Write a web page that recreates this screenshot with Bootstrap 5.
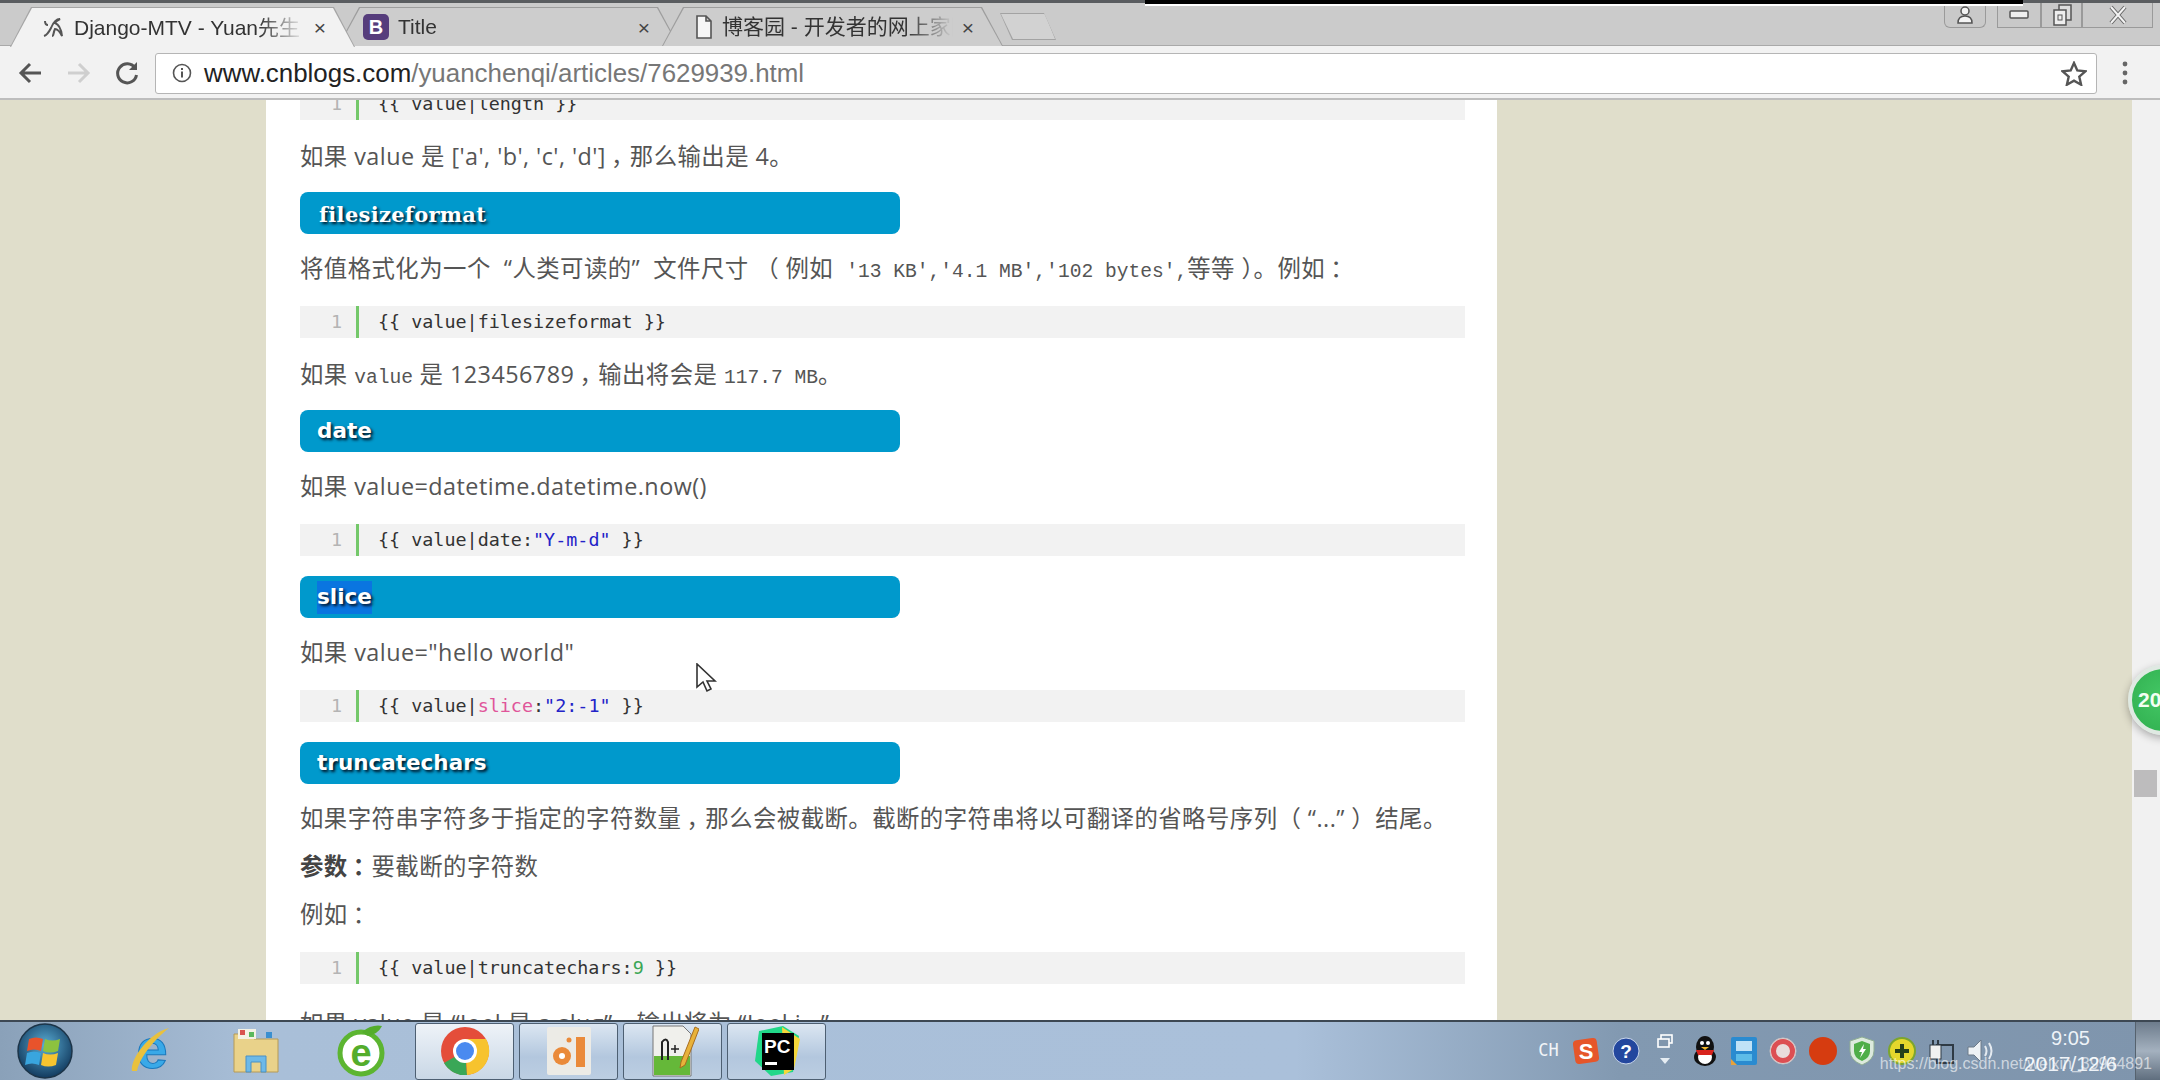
<!DOCTYPE html>
<html lang="zh-CN">
<head>
    <meta charset="UTF-8">
    <meta name="viewport" content="width=device-width, initial-scale=1.0">
    <title>Django-MTV - Yuan先生</title>
    <link href="https://cdn.jsdelivr.net/npm/bootstrap@5.3.0/dist/css/bootstrap.min.css" rel="stylesheet">
    <style>
        html, body { height: 100%; }
        body {
            overflow: hidden;
            background: #e0decb;
            font-family: "Open Sans", "Noto Sans CJK SC", sans-serif;
            color: #555;
        }
        .screen { height: 1080px; position: relative; }

        /* browser chrome */
        .tab-strip {
            height: 46px;
            padding: 4px 7px 0 10px;
            background: #cbcbcb;
            border-top: 3px solid #5a5d60;
            border-bottom: 1px solid #a9a9a9;
            position: relative;
        }
        .tab-item {
            width: 341px;
            height: 39px;
            margin-right: -17px;
            position: relative;
            background: #9d9d9d;
            clip-path: polygon(0 100%, 21px 0, calc(100% - 21px) 0, 100% 100%);
            font-family: "Liberation Sans", "Noto Sans CJK SC", sans-serif;
            font-size: 21px;
            color: #333;
            flex-shrink: 0;
        }
        .tab-fill {
            position: absolute;
            inset: 1px 1px 0 1px;
            background: #cdcdcd;
            clip-path: polygon(0 100%, 21px 0, calc(100% - 21px) 0, 100% 100%);
            display: flex;
            align-items: center;
            padding: 0 28px 0 24px;
            gap: 9px;
        }
        .tab-active { z-index: 2; width: 345px; background: #a5a5a5; height: 40px; }
        .tab-active .tab-fill { background: #f2f2f2; bottom: 0; padding-left: 30px; }
        .tab-label {
            flex: 1;
            overflow: hidden;
            white-space: nowrap;
            -webkit-mask-image: linear-gradient(90deg, #000 80%, transparent 100%);
            mask-image: linear-gradient(90deg, #000 80%, transparent 100%);
        }
        .tab-x { font-size: 21px; color: #444; line-height: 1; }
        .tab-new {
            width: 56px;
            height: 27px;
            margin: 6px 0 0 14px;
            background: #a3a3a3;
            clip-path: polygon(0 0, 44px 0, 100% 100%, 12px 100%);
            position: relative;
        }
        .tab-new::before {
            content: "";
            position: absolute;
            inset: 1px;
            background: #d2d2d2;
            clip-path: polygon(0 0, 44px 0, 100% 100%, 12px 100%);
        }
        .rec-bar {
            position: absolute;
            left: 1145px;
            top: -3px;
            width: 878px;
            height: 6px;
            background: #000;
            border-bottom: 2px solid #fff;
        }
        .win-btn {
            height: 25px;
            background: #c9c9c9;
            border: 1px solid #9a9a9a;
            border-top: 0;
            display: flex;
            align-items: center;
            justify-content: center;
            margin-top: -4px;
        }
        .win-user { width: 42px; margin-right: 11px; }
        .win-min { width: 44px; }
        .win-restore { width: 41px; }
        .win-close { width: 71px; }
        .toolbar {
            height: 54px;
            background: #f2f2f2;
            border-bottom: 2px solid #bdbdbd;
            padding: 2px 8px 0 5px;
        }
        .nav-slot { width: 50px; }
        .nav-slot-fwd { width: 47px; }
        .omnibox {
            width: 1942px;
            height: 41px;
            margin-left: 3px;
            background: #fff;
            border: 1px solid #b5b5b5;
            border-radius: 3px;
            padding: 0 9px 0 16px;
            font-family: "Liberation Sans", sans-serif;
            font-size: 25.9px;
            color: #777;
            flex-shrink: 0;
        }
        .omnibox-info { margin-right: 12px; }
        .omnibox b { font-weight: 400; color: #222; }

        /* page */
        .page-view {
            height: 920px;
            overflow: hidden;
            background: #e0decb;
        }
        .post-col {
            width: 1231px;
            margin-left: 266px;
            height: 100%;
            background: #fff;
            padding: 0 32px 0 34px;
            overflow: hidden;
            font-size: 23.4px;
            line-height: 28px;
            flex-shrink: 0;
        }
        .post-col p { height: 30px; margin: 0 0 18px; white-space: nowrap; letter-spacing: .45px; }
        .post-col p.para-last { margin-top: 25px; }
        .post-col p strong { color: #444; }
        .mono-inline { font-family: "Liberation Mono", monospace; font-size: 19.6px; letter-spacing: 0; }
        .cjk-mark { position: relative; left: .22em; }
        .sec-title {
            height: 42px;
            width: 600px;
            margin: 20px 0;
            padding: 0 17px;
            background: #0099cc;
            border-radius: 8px;
            color: #fff;
            font-family: "DejaVu Sans", sans-serif;
            font-weight: 700;
            font-size: 21.5px;
            line-height: 42px;
            text-shadow: 2px 2px 3px #012;
        }
        .sec-serif { font-family: "DejaVu Serif", serif; font-size: 21px; padding-left: 19px; letter-spacing: .3px; line-height: 46px; }
        .sec-title mark {
            padding: 3px 0 5px;
            background: #0a75e0;
            color: #fff;
        }
        .code-row {
            height: 32px;
            margin: 22px 0;
            background: #f2f2f2;
            font-family: "DejaVu Sans Mono", monospace;
            font-size: 18.4px;
            line-height: 32px;
            color: #333;
        }
        .code-first { margin-top: -12px; }
        .code-tail { margin-bottom: 20px; }
        .code-num { width: 59px; padding-right: 14px; text-align: right; color: #b4b4b4; border-right: 3px solid #74c86a; }
        .code-text { padding-left: 19px; white-space: pre; }
        .tok-pink { color: #e0559a; }
        .tok-blue { color: #2323c8; }
        .tok-green { color: #3aa655; }
        .side-gutter { flex: 1; }
        .scroll-track { width: 28px; background: #f1f1f1; position: relative; }
        .scroll-thumb {
            position: absolute;
            left: 2px;
            top: 670px;
            width: 23px;
            height: 27px;
            background: #bdbcbd;
        }
        .float-badge {
            position: absolute;
            left: 2128px;
            top: 665px;
            width: 70px;
            height: 70px;
            border-radius: 50%;
            background: radial-gradient(circle at 50% 45%, #44c765, #2fae4e);
            border: 4px solid #dfe9e2;
            box-shadow: 0 3px 8px rgba(0, 0, 0, .3);
            color: #f2fff2;
            font-family: "Liberation Sans", sans-serif;
            font-weight: 700;
            font-size: 21px;
            line-height: 62px;
            padding-left: 6px;
        }
        .mouse-cursor { position: absolute; left: 695px; top: 663px; }

        /* taskbar */
        .taskbar {
            height: 60px;
            position: relative;
            background: linear-gradient(90deg, #8aa1b9 0, #a9bfd8 12%, #aac0da 60%, #8299b1 75%, #7f95ad 100%);
            border-top: 2px solid #3d4853;
        }
        .pin-slot { width: 105px; height: 58px; }
        .start-slot { width: 98px; height: 58px; padding-left: 15px; }
        .app-btn {
            width: 99px;
            height: 57px;
            margin-right: 5px;
            background: linear-gradient(180deg, #dbe6f2, #b3c7de 60%, #bccee2);
            border: 1px solid #4d5f72;
            border-radius: 3px;
        }
        .app-first { background: linear-gradient(180deg, #eef3f8, #c9d7e6); margin-left: 2px; }
        .tray-lang { font-family: "DejaVu Sans Mono", monospace; font-size: 17px; color: #f2f5f8; width: 48px; text-align: right; padding-right: 8px; }
        .tray-slot { width: 39.4px; height: 58px; }
        .clock {
            width: 135px;
            padding-left: 6px;
            text-align: center;
            font-family: "Liberation Sans", sans-serif;
            color: #eef3f8;
        }
        .clock-time { font-size: 20px; line-height: 26px; }
        .clock-date { font-size: 21px; line-height: 26px; }
        .show-desktop { width: 25px; height: 58px; background: linear-gradient(180deg, #6d7c8c, #a4b1bf 50%, #5f6e7e); border-left: 1px solid #56626e; }
        .watermark {
            position: absolute;
            right: 8px;
            top: 1052px;
            font-family: "Liberation Sans", sans-serif;
            font-size: 16px;
            color: rgba(255, 255, 255, .62);
        }
    </style>
</head>
<body>
<div class="screen">

    <div class="tab-strip d-flex align-items-start">
        <div class="tab-item tab-active">
            <div class="tab-fill">
                <svg width="24" height="26" viewBox="0 0 24 26"><path d="M3 21c3-1 5-4 7-8 2-5 5-9 9-9-2 1-4 2-5 4 3 1 6 5 7 13-2-4-4-7-7-7-2 4-1 7-3 7M7 10c-2 0-3-2-3-4" fill="none" stroke="#555" stroke-width="2"/></svg>
                <span class="tab-label">Django-MTV - Yuan先生</span>
                <span class="tab-x">×</span>
            </div>
        </div>
        <div class="tab-item">
            <div class="tab-fill">
                <svg width="26" height="26" viewBox="0 0 26 26"><rect width="26" height="26" rx="5" fill="#563d7c"/><text x="13" y="20" text-anchor="middle" font-family="Liberation Sans" font-weight="700" font-size="20" fill="#fff">B</text></svg>
                <span class="tab-label">Title</span>
                <span class="tab-x">×</span>
            </div>
        </div>
        <div class="tab-item">
            <div class="tab-fill">
                <svg width="18" height="24" viewBox="0 0 18 24" class="ms-2"><path d="M2 1h9l5 5v17H2zM11 1v5h5" fill="#f6f6f6" stroke="#555" stroke-width="1.6"/></svg>
                <span class="tab-label">博客园 - 开发者的网上家园</span>
                <span class="tab-x">×</span>
            </div>
        </div>
        <div class="tab-new"></div>
        <div class="d-flex ms-auto">
            <div class="win-btn win-user rounded-bottom">
                <svg width="18" height="20" viewBox="0 0 18 20"><circle cx="9" cy="6" r="4" fill="#f4f4f4" stroke="#555" stroke-width="1.5"/><path d="M2 18c0-5 3-7 7-7s7 2 7 7z" fill="#f4f4f4" stroke="#555" stroke-width="1.5"/></svg>
            </div>
            <div class="win-btn win-min rounded-bottom-start">
                <svg width="20" height="10" viewBox="0 0 20 10"><rect x="1" y="1" width="18" height="7" rx="1" fill="#eee" stroke="#555" stroke-width="1.5"/></svg>
            </div>
            <div class="win-btn win-restore">
                <svg width="20" height="22" viewBox="0 0 20 22"><rect x="7" y="1" width="12" height="15" fill="#ddd" stroke="#555" stroke-width="1.5"/><rect x="2" y="6" width="12" height="15" fill="#eee" stroke="#555" stroke-width="1.5"/><rect x="6" y="11" width="4" height="5" fill="none" stroke="#555"/></svg>
            </div>
            <div class="win-btn win-close rounded-bottom-end">
                <svg width="22" height="20" viewBox="0 0 22 20"><path d="M4 2l14 16M18 2L4 18" stroke="#666" stroke-width="4"/><path d="M4 2l14 16M18 2L4 18" stroke="#f3f3f3" stroke-width="2"/></svg>
            </div>
        </div>
        <div class="rec-bar"></div>
    </div>

    <div class="toolbar d-flex align-items-center">
        <div class="nav-slot d-flex justify-content-center">
            <svg width="26" height="24" viewBox="0 0 26 24"><path d="M24 12H4M13 3l-9 9 9 9" fill="none" stroke="#555" stroke-width="3"/></svg>
        </div>
        <div class="nav-slot nav-slot-fwd d-flex justify-content-center">
            <svg width="26" height="24" viewBox="0 0 26 24"><path d="M2 12h20M13 3l9 9-9 9" fill="none" stroke="#cfcfcf" stroke-width="3"/></svg>
        </div>
        <div class="nav-slot d-flex justify-content-center">
            <svg width="24" height="26" viewBox="0 0 24 26"><path d="M20 8a9.500 9.500 0 1 0 1.500 7" fill="none" stroke="#555" stroke-width="3"/><path d="M22 2v8h-8z" fill="#555"/></svg>
        </div>
        <div class="omnibox d-flex align-items-center">
            <svg width="20" height="20" viewBox="0 0 20 20" class="omnibox-info"><circle cx="10" cy="10" r="8.500" fill="none" stroke="#555" stroke-width="1.6"/><path d="M10 8.500v6M10 5v2" stroke="#555" stroke-width="2"/></svg>
            <span><b>www.cnblogs.com</b>/yuanchenqi/articles/7629939.html</span>
            <svg width="26" height="25" viewBox="0 0 26 25" class="ms-auto"><path d="M13 2l3.300 7.500 8 .8-6 5.400 1.800 8L13 19.600 5.900 23.700l1.800-8-6-5.400 8-.8z" fill="none" stroke="#555" stroke-width="2.400"/></svg>
        </div>
        <div class="flex-grow-1 d-flex justify-content-center">
            <svg width="6" height="24" viewBox="0 0 6 24"><circle cx="3" cy="3" r="2.400" fill="#666"/><circle cx="3" cy="12" r="2.400" fill="#666"/><circle cx="3" cy="21" r="2.400" fill="#666"/></svg>
        </div>
    </div>

    <div class="page-view d-flex">
        <div class="post-col">
            <div class="code-row code-first d-flex"><div class="code-num">1</div><div class="code-text">{{ value|length }}</div></div>
            <p>如果 value 是 ['a', 'b', 'c', 'd']<span class="cjk-mark">，</span>那么输出是 4。</p>

            <div class="sec-title sec-serif">filesizeformat</div>
            <p>将值格式化为一个&nbsp;&nbsp;“人类可读的”&nbsp;&nbsp;文件尺寸&nbsp;（&nbsp;例如&nbsp;&nbsp;<span class="mono-inline">'13 KB','4.1 MB','102 bytes',</span>等等&nbsp;）。例如<span class="cjk-mark">：</span></p>
            <div class="code-row d-flex"><div class="code-num">1</div><div class="code-text">{{ value|filesizeformat }}</div></div>
            <p>如果 <span class="mono-inline">value</span> 是 123456789<span class="cjk-mark">，</span>输出将会是 <span class="mono-inline">117.7 MB</span>。</p>

            <div class="sec-title">date</div>
            <p>如果 value=datetime.datetime.now()</p>
            <div class="code-row code-tail d-flex"><div class="code-num">1</div><div class="code-text">{{ value|date:<span class="tok-blue">"Y-m-d"</span> }}</div></div>

            <div class="sec-title"><mark>slice</mark></div>
            <p>如果 value="hello world"</p>
            <div class="code-row code-tail d-flex"><div class="code-num">1</div><div class="code-text">{{ value|<span class="tok-pink">slice</span>:<span class="tok-blue">"2:-1"</span> }}</div></div>

            <div class="sec-title">truncatechars</div>
            <p>如果字符串字符多于指定的字符数量<span class="cjk-mark">，</span>那么会被截断。截断的字符串将以可翻译的省略号序列（&nbsp;“...”&nbsp;）结尾。</p>
            <p><strong>参数<span class="cjk-mark">：</span></strong>要截断的字符数</p>
            <p>例如<span class="cjk-mark">：</span></p>
            <div class="code-row d-flex"><div class="code-num">1</div><div class="code-text">{{ value|truncatechars:<span class="tok-green">9</span> }}</div></div>
            <p class="para-last">如果 value 是 “Joel 是 a slug”<span class="cjk-mark">，</span>输出将为 “Joel i...”</p>
        </div>
        <div class="side-gutter"></div>
        <div class="scroll-track"><div class="scroll-thumb"></div></div>
    </div>

    <div class="float-badge">20</div>
    <svg class="mouse-cursor" width="22" height="30" viewBox="0 0 22 30"><path d="M2 1v23l6-5 4 9 4-2-4-8h8z" fill="#fff" stroke="#333" stroke-width="1.600"/></svg>

    <div class="taskbar d-flex align-items-center">
        <div class="start-slot d-flex align-items-center">
            <svg width="60" height="56" viewBox="0 0 60 56">
                <defs><radialGradient id="orb" cx="50%" cy="40%" r="60%"><stop offset="0" stop-color="#5aaed6"/><stop offset="1" stop-color="#123a5e"/></radialGradient></defs>
                <circle cx="30" cy="28" r="27" fill="url(#orb)" stroke="#1c3448" stroke-width="1.500"/>
                <path d="M14 16q7-3 14 0l-2 12q-7-3-14 0z" fill="#e8532b"/>
                <path d="M30 16q7 3 15 0l-2 12q-8 3-15 0z" fill="#8cc23f"/>
                <path d="M12 30q7-3 14 0l-2 12q-7-3-14 0z" fill="#39a5de"/>
                <path d="M28 30q7 3 15 0l-2 12q-8 3-15 0z" fill="#f7c42f"/>
            </svg>
        </div>
        <div class="pin-slot d-flex align-items-center justify-content-center">
            <svg width="52" height="52" viewBox="0 0 52 52"><text x="27" y="43" text-anchor="middle" font-family="Liberation Sans" font-weight="700" font-size="56" fill="#39a9e8" stroke="#1b79bd">e</text><path d="M7 46C5 34 24 8 44 3 36 9 16 28 12 46z" fill="#e9c13d"/></svg>
        </div>
        <div class="pin-slot d-flex align-items-center justify-content-center">
            <svg width="52" height="50" viewBox="0 0 52 50"><path d="M4 8h16l4 5h24v33H4z" fill="#e9d28a" stroke="#b59a56"/><rect x="8" y="3" width="18" height="10" fill="#f4f1e4"/><rect x="10" y="4" width="5" height="5" fill="#d9534f"/><rect x="19" y="6" width="5" height="5" fill="#5cb85c"/><rect x="36" y="6" width="6" height="6" fill="#3a8fd0"/><path d="M16 46V30h20v16h-5V36H21v10z" fill="#6cb9e8" stroke="#4a90c4"/></svg>
        </div>
        <div class="pin-slot d-flex align-items-center justify-content-center">
            <svg width="50" height="54" viewBox="0 0 50 54"><circle cx="25" cy="29" r="21" fill="#fff" stroke="#5cb531" stroke-width="5"/><text x="25" y="42" text-anchor="middle" font-family="Liberation Sans" font-weight="700" font-size="38" fill="#54ad2c">e</text><path d="M26 8q10-8 20-6-4 8-14 10z" fill="#54ad2c"/></svg>
        </div>
        <div class="app-btn app-first d-flex align-items-center justify-content-center">
            <svg width="50" height="50" viewBox="0 0 50 50"><circle cx="25" cy="25" r="24" fill="#e44d3a"/><path d="M25 25L4 37A24 24 0 0 0 27 49z" fill="#3aa757"/><path d="M25 13h21a24 24 0 0 1-19 36z" fill="#f7c32e"/><circle cx="25" cy="25" r="12" fill="#fff"/><circle cx="25" cy="25" r="9" fill="#4a8af0"/></svg>
        </div>
        <div class="app-btn d-flex align-items-center justify-content-center">
            <svg width="44" height="48" viewBox="0 0 44 48"><rect width="44" height="48" rx="2" fill="#ecebe6"/><circle cx="15" cy="29" r="9" fill="#ea8a3a"/><circle cx="15" cy="29" r="3" fill="#fff"/><circle cx="22" cy="13" r="2.500" fill="#ea8a3a"/><rect x="29" y="10" width="9" height="30" fill="#ea8a3a"/></svg>
        </div>
        <div class="app-btn d-flex align-items-center justify-content-center">
            <svg width="52" height="54" viewBox="0 0 52 54"><path d="M6 2h30l8 8v42H6z" fill="#f0f0ec" stroke="#777"/><path d="M7 32h36v19H7z" fill="#65b839"/><path d="M15 36V18q4-5 6 0v18" fill="none" stroke="#222" stroke-width="2"/><path d="M24 25h8M28 21v8" stroke="#222" stroke-width="1.500"/><path d="M34 38L48 3l4 2-14 36-5 3z" fill="#e8b23a" stroke="#a86d1e"/></svg>
        </div>
        <div class="app-btn d-flex align-items-center justify-content-center">
            <svg width="50" height="52" viewBox="0 0 50 52"><path d="M7 6l24-5 16 10-6 36-22 4L3 36z" fill="#21d789"/><path d="M30 2l18 12-6 30-10 6z" fill="#f5d73a"/><rect x="10" y="8" width="32" height="37" fill="#000"/><text x="12" y="28" font-family="Liberation Sans" font-weight="700" font-size="19" fill="#fff">PC</text><rect x="13" y="37" width="12" height="3" fill="#fff"/></svg>
        </div>

        <div class="d-flex align-items-center ms-auto">
            <div class="tray-lang">CH</div>
            <div class="tray-slot d-flex align-items-center justify-content-center">
                <svg width="28" height="28" viewBox="0 0 28 28"><rect x="2" y="2" width="24" height="24" rx="4" fill="#e6562a" transform="rotate(-8 14 14)"/><text x="14" y="22" text-anchor="middle" font-family="Liberation Sans" font-weight="700" font-size="22" fill="#fff">S</text></svg>
            </div>
            <div class="tray-slot d-flex align-items-center justify-content-center">
                <svg width="28" height="28" viewBox="0 0 28 28"><circle cx="14" cy="14" r="13" fill="#23479e" stroke="#c9d6ea"/><text x="14" y="21" text-anchor="middle" font-family="Liberation Sans" font-weight="700" font-size="19" fill="#fff">?</text></svg>
            </div>
            <div class="tray-slot d-flex align-items-center justify-content-center">
                <svg width="18" height="34" viewBox="0 0 18 34"><rect x="5" y="1" width="11" height="8" fill="none" stroke="#fff" stroke-width="1.600"/><rect x="2" y="5" width="11" height="8" fill="#8096ad" stroke="#fff" stroke-width="1.600"/><path d="M4 24h10l-5 6z" fill="#e6edf3"/></svg>
            </div>
            <div class="tray-slot d-flex align-items-center justify-content-center">
                <svg width="26" height="32" viewBox="0 0 26 32"><ellipse cx="13" cy="12" rx="9" ry="11" fill="#111"/><ellipse cx="13" cy="22" rx="11" ry="9" fill="#111"/><ellipse cx="13" cy="22" rx="7" ry="7" fill="#fff"/><path d="M4 15h18l-2 5H6z" fill="#d8231d"/><circle cx="10" cy="8" r="2" fill="#fff"/><circle cx="16" cy="8" r="2" fill="#fff"/><path d="M9 12h8l-4 3z" fill="#f3b72a"/></svg>
            </div>
            <div class="tray-slot d-flex align-items-center justify-content-center">
                <svg width="28" height="30" viewBox="0 0 28 30"><rect x="1" y="1" width="26" height="28" rx="2" fill="#2a8bd0"/><rect x="6" y="5" width="16" height="10" fill="#bfe2f7"/><rect x="6" y="18" width="16" height="7" fill="#5dbce8"/><path d="M1 23l6 6H1z" fill="#e8a23a"/></svg>
            </div>
            <div class="tray-slot d-flex align-items-center justify-content-center">
                <svg width="28" height="28" viewBox="0 0 28 28"><circle cx="14" cy="14" r="13" fill="#e9dcdc" stroke="#c9c0c0"/><circle cx="14" cy="14" r="9.500" fill="none" stroke="#dc4f53" stroke-width="5"/></svg>
            </div>
            <div class="tray-slot d-flex align-items-center justify-content-center">
                <svg width="30" height="30" viewBox="0 0 30 30"><circle cx="15" cy="15" r="14" fill="#d63c10"/></svg>
            </div>
            <div class="tray-slot d-flex align-items-center justify-content-center">
                <svg width="28" height="30" viewBox="0 0 28 30"><path d="M14 1l12 4v10q0 9-12 14Q2 24 2 15V5z" fill="#dceadd" stroke="#8fae93"/><path d="M14 5l8 3v7q0 7-8 10-8-3-8-10V8z" fill="#4fae49"/><path d="M16 8l-5 8h3l-2 6 6-9h-3z" fill="#fff"/></svg>
            </div>
            <div class="tray-slot d-flex align-items-center justify-content-center">
                <svg width="28" height="28" viewBox="0 0 28 28"><circle cx="14" cy="14" r="13" fill="#e4d72c" stroke="#7ca52e" stroke-width="2"/><path d="M14 7v14M7 14h14" stroke="#26401a" stroke-width="4"/></svg>
            </div>
            <div class="tray-slot d-flex align-items-center justify-content-center">
                <svg width="28" height="28" viewBox="0 0 28 28"><rect x="10" y="8" width="16" height="18" fill="none" stroke="#2f3a44" stroke-width="2"/><rect x="3" y="8" width="11" height="14" fill="#f1f1f1" stroke="#2f3a44"/><path d="M6 3v5M11 3v5" stroke="#2f3a44" stroke-width="2"/></svg>
            </div>
            <div class="tray-slot d-flex align-items-center justify-content-center">
                <svg width="28" height="26" viewBox="0 0 28 26"><path d="M2 9h6l7-7v22l-7-7H2z" fill="#eef2f5" stroke="#6c7a88"/><path d="M19 8q3 5 0 10M23 5q5 8 0 16" fill="none" stroke="#e4eaf0" stroke-width="2"/></svg>
            </div>
            <div class="clock">
                <div class="clock-time">9:05</div>
                <div class="clock-date">2017/12/6</div>
            </div>
            <div class="show-desktop"></div>
        </div>
    </div>

    <div class="watermark">https://blog.csdn.net/weixin_39944891</div>
</div>
<script src="https://cdn.jsdelivr.net/npm/bootstrap@5.3.0/dist/js/bootstrap.bundle.min.js"></script>
</body>
</html>
